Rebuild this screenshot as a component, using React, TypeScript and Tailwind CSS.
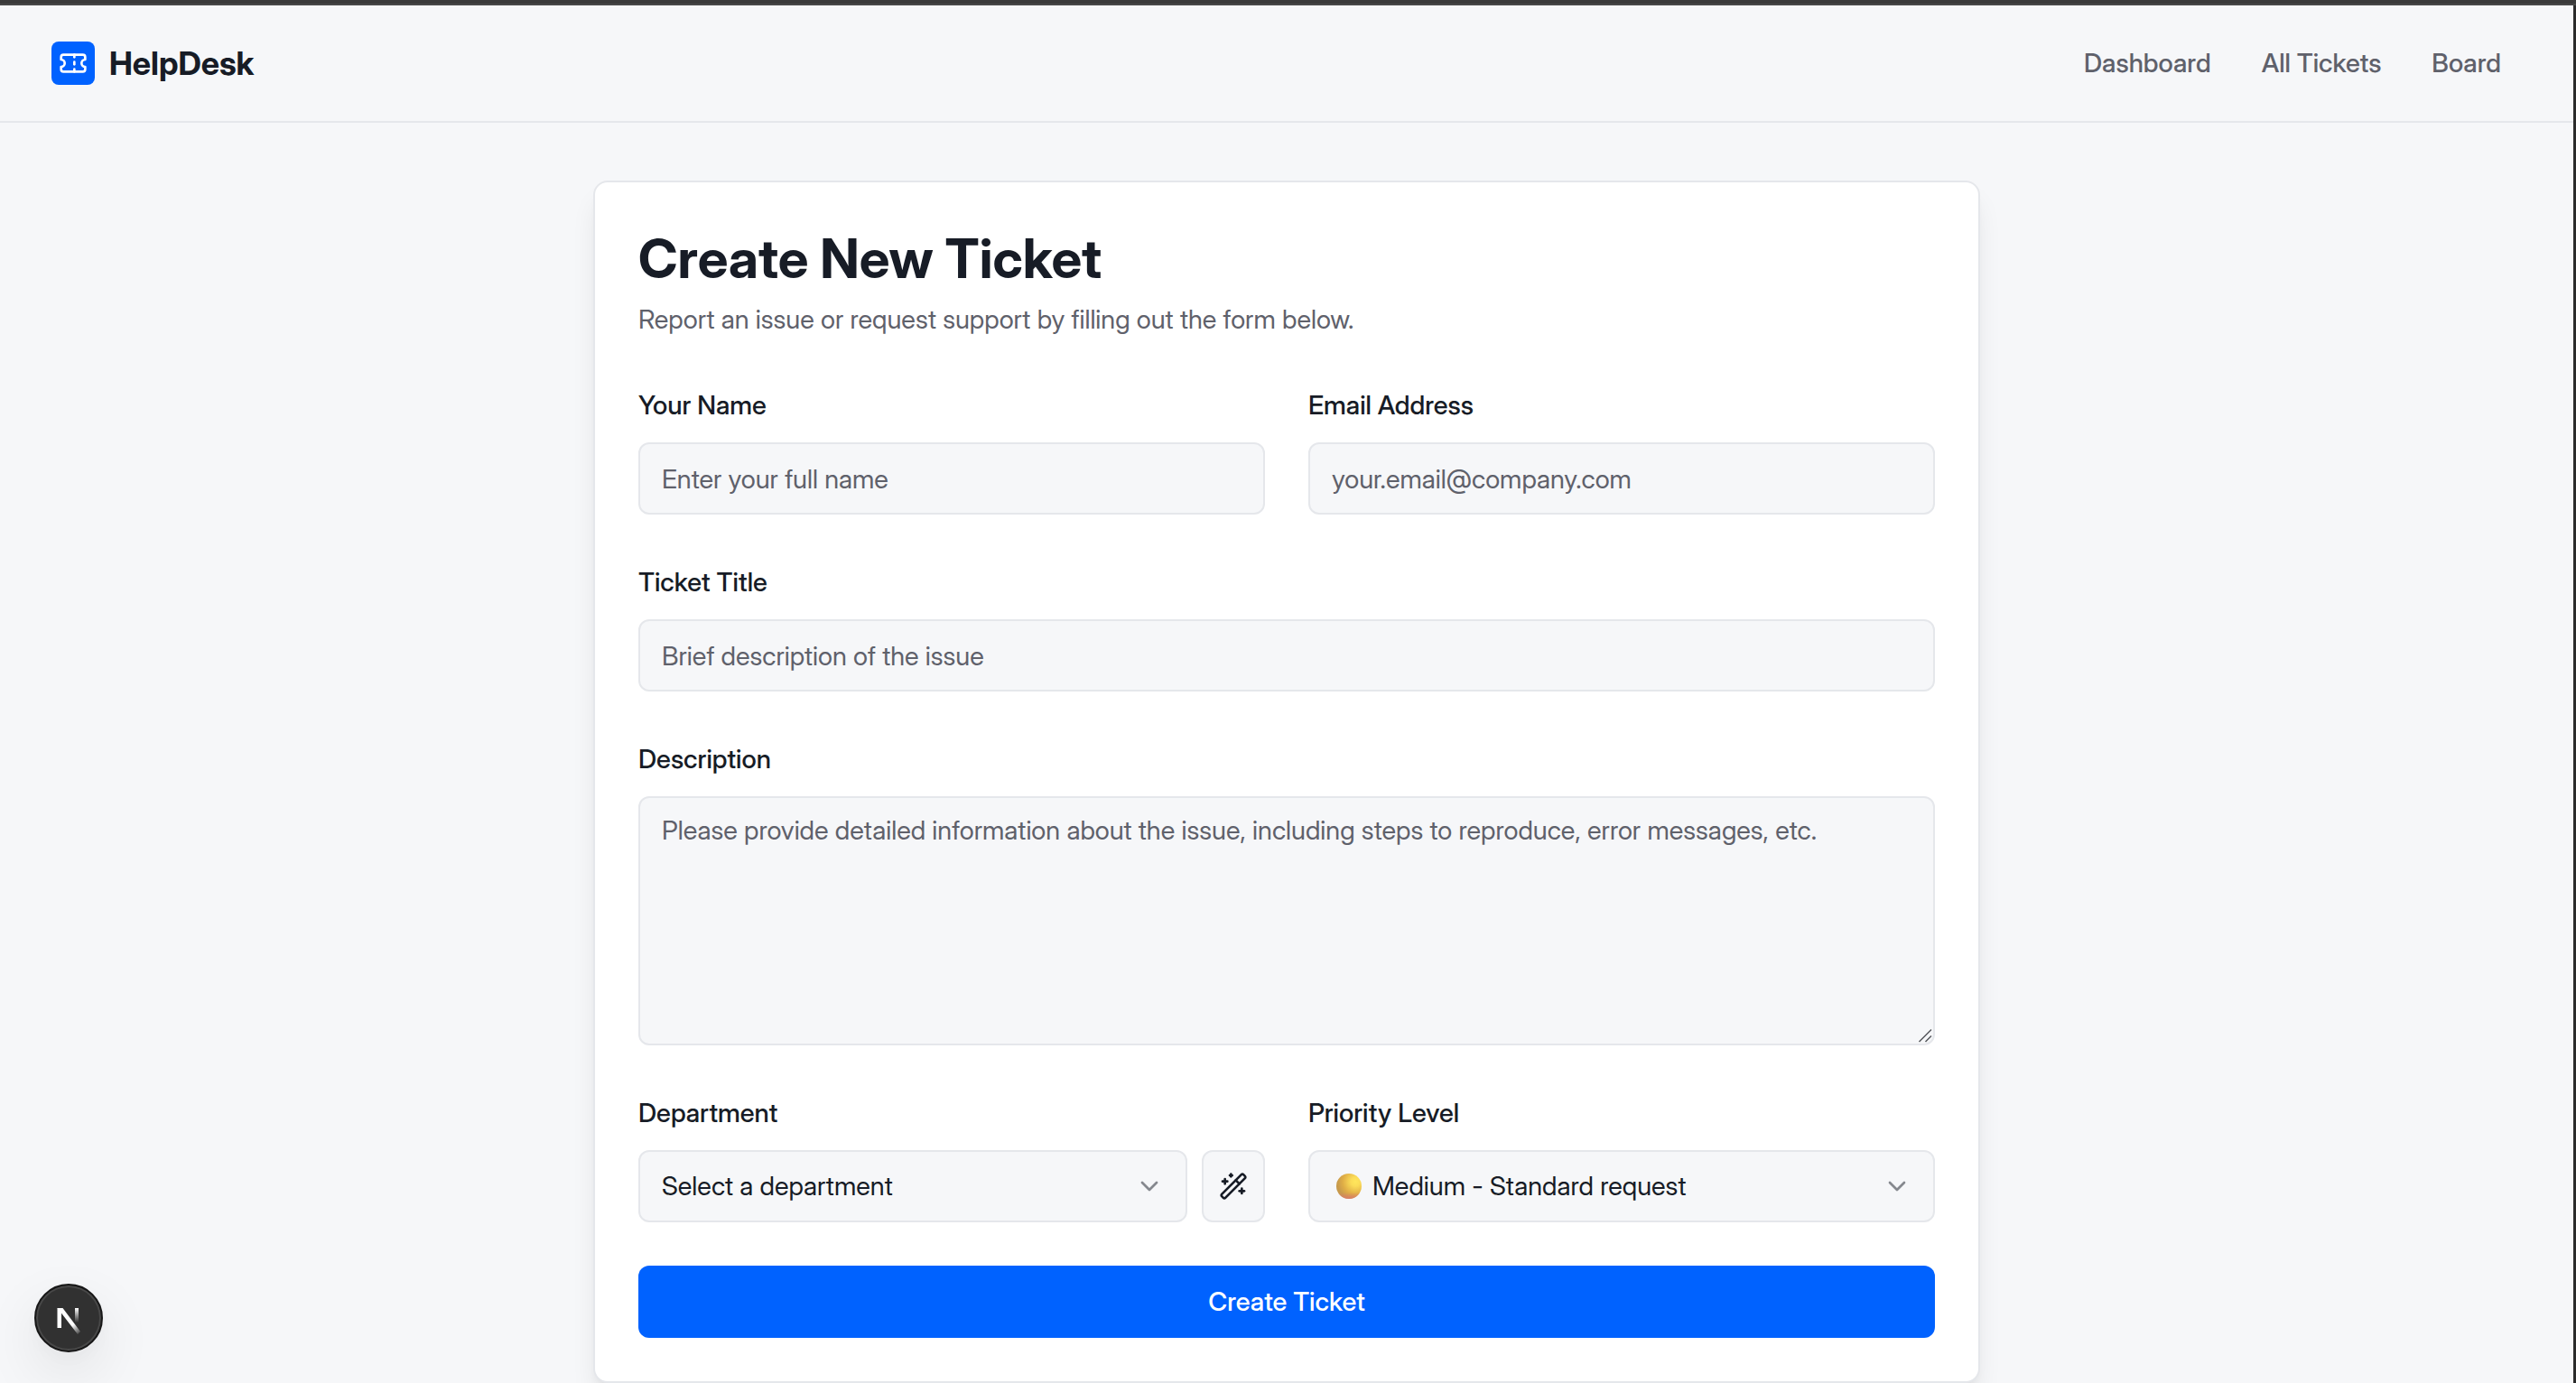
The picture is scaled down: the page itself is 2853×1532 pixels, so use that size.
import React from "react";
import { ChevronDown, Ticket, WandSparkles } from "lucide-react";

const control =
  "w-full rounded-xl border-2 border-[#e5e7eb] bg-[#f6f7f9] px-6 text-[29px] leading-10 text-[#171c26] placeholder:text-[#5f616b] placeholder:opacity-100 outline-none [font-feature-settings:'calt'_0]";

function Field({ id, label, children }: { id: string; label: string; children: React.ReactNode }) {
  return (
    <div className="flex min-w-0 flex-col gap-3.5">
      <label htmlFor={id} className="text-[29px] font-medium leading-[54px]">
        {label}
      </label>
      {children}
    </div>
  );
}

function Chevron() {
  return (
    <ChevronDown className="pointer-events-none absolute right-[26px] top-6 size-8 text-[#171c26] opacity-50" />
  );
}

function PriorityDot() {
  return (
    <svg viewBox="0 0 28 28" className="pointer-events-none absolute left-[31px] top-[26px] size-7" aria-hidden="true">
      <defs>
        <radialGradient id="dot" cx="0.76" cy="0.32" r="0.72">
          <stop offset="0" stopColor="#ffe65c" />
          <stop offset="0.25" stopColor="#fbdc58" />
          <stop offset="0.7" stopColor="#e0ae46" />
          <stop offset="1" stopColor="#c79a4c" />
        </radialGradient>
        <linearGradient id="dotBase" x1="0" y1="0" x2="0" y2="1">
          <stop offset="0.75" stopColor="#dd7a6a" stopOpacity="0" />
          <stop offset="1" stopColor="#dd7a6a" stopOpacity="0.9" />
        </linearGradient>
      </defs>
      <circle cx="14" cy="14" r="14" fill="url(#dot)" />
      <circle cx="14" cy="14" r="14" fill="url(#dotBase)" />
    </svg>
  );
}

function DevBadge() {
  return (
    <button
      type="button"
      aria-label="Open Next.js Dev Tools"
      className="fixed bottom-[34px] left-[38px] flex size-[76px] items-center justify-center rounded-full border-2 border-[#171717] bg-[#313131] shadow-[inset_0_0_0_2px_#484848,0_24px_64px_rgba(0,0,0,0.09),0_8px_24px_rgba(0,0,0,0.03)]"
    >
      <svg viewBox="0 0 76 76" className="size-[76px] shrink-0" fill="none" aria-hidden="true">
        <defs>
          <linearGradient id="diag" x1="38" y1="42" x2="50" y2="57" gradientUnits="userSpaceOnUse">
            <stop offset="0.3" stopColor="#fff" />
            <stop offset="1" stopColor="#fff" stopOpacity="0" />
          </linearGradient>
          <linearGradient id="stem" x1="46" y1="27" x2="46" y2="43" gradientUnits="userSpaceOnUse">
            <stop offset="0" stopColor="#fff" />
            <stop offset="1" stopColor="#fff" stopOpacity="0" />
          </linearGradient>
        </defs>
        <path d="M25.500 27h6L51 53l-3 3L29.500 32z" fill="url(#diag)" />
        <path d="M25.500 27h4.500v22h-4.500z" fill="#fff" />
        <path d="M45 27h4v16h-4z" fill="url(#stem)" />
      </svg>
    </button>
  );
}

export default function App() {
  return (
    <div className="flex min-h-screen flex-col bg-[#f6f7f9] font-['Inter_Display','Inter',sans-serif] text-[#171c26]">
      <div className="h-1.5 border-b-2 border-[#484848] bg-[#3b3b3b]" />
      <div className="flex-1 border-r-[3px] border-[#2b2b2b]">
        <header className="flex h-[130px] items-center justify-between border-b-2 border-[#e5e7eb] pl-[57px] pr-20">
          <a href="#" className="flex items-center gap-4">
            <span className="flex size-12 items-center justify-center rounded-lg bg-[#0062ff] text-white">
              <Ticket className="size-8" />
            </span>
            <span className="text-4xl font-bold">HelpDesk</span>
          </a>
          <nav className="flex gap-14 text-[29px] font-medium leading-10 text-[#5f616b]">
            <a href="#dashboard">Dashboard</a>
            <a href="#tickets">All Tickets</a>
            <a href="#board">Board</a>
          </nav>
        </header>

        <main className="pt-16">
          <section className="mx-auto max-w-[1536px] rounded-2xl border-2 border-[#e5e7eb] bg-white p-12 shadow-[0_20px_30px_-6px_rgba(0,0,0,0.1),0_8px_12px_-8px_rgba(0,0,0,0.1)]">
            <h1 className="text-6xl font-bold leading-[72px]">Create New Ticket</h1>
            <p className="mt-3 text-[29px] leading-10 text-[#5f616b]">
              Report an issue or request support by filling out the form below.
            </p>

            <form className="mt-12 flex flex-col gap-12" onSubmit={(e) => e.preventDefault()}>
              <div className="grid grid-cols-2 gap-12">
                <Field id="name" label="Your Name">
                  <input id="name" type="text" placeholder="Enter your full name" className={`${control} h-20`} />
                </Field>
                <Field id="email" label="Email Address">
                  <input id="email" type="email" placeholder="your.email@company.com" className={`${control} h-20`} />
                </Field>
              </div>

              <Field id="title" label="Ticket Title">
                <input id="title" type="text" placeholder="Brief description of the issue" className={`${control} h-20`} />
              </Field>

              <Field id="description" label="Description">
                <div className="relative flex">
                  <textarea
                    id="description"
                    placeholder="Please provide detailed information about the issue, including steps to reproduce, error messages, etc."
                    className={`${control} h-[276px] resize-none py-4`}
                  />
                  <svg
                    viewBox="0 0 16 16"
                    className="pointer-events-none absolute bottom-[3px] right-[3px] size-4"
                    stroke="#55575c"
                    strokeWidth="1.500"
                    aria-hidden="true"
                  >
                    <path d="M1.500 15 15 1.500M8.500 15 15 8.500" />
                  </svg>
                </div>
              </Field>

              <div className="grid grid-cols-2 gap-12">
                <Field id="department" label="Department">
                  <div className="flex gap-4">
                    <div className="relative min-w-0 flex-1">
                      <select id="department" defaultValue="" className={`${control} h-20 appearance-none`}>
                        <option value="">Select a department</option>
                      </select>
                      <Chevron />
                    </div>
                    <button
                      type="button"
                      aria-label="Suggest department"
                      className="flex h-20 w-[70px] items-center justify-center rounded-xl border-2 border-[#e5e7eb] bg-[#f6f7f9]"
                    >
                      <WandSparkles className="size-8" />
                    </button>
                  </div>
                </Field>
                <Field id="priority" label="Priority Level">
                  <div className="relative">
                    <select id="priority" defaultValue="medium" className={`${control} h-20 appearance-none pl-[69px]`}>
                      <option value="medium">Medium - Standard request</option>
                    </select>
                    <PriorityDot />
                    <Chevron />
                  </div>
                </Field>
              </div>

              <button type="submit" className="h-20 rounded-xl bg-[#0062ff] text-[29px] font-medium leading-10 text-white">
                Create Ticket
              </button>
            </form>
          </section>
        </main>
      </div>
      <DevBadge />
    </div>
  );
}
